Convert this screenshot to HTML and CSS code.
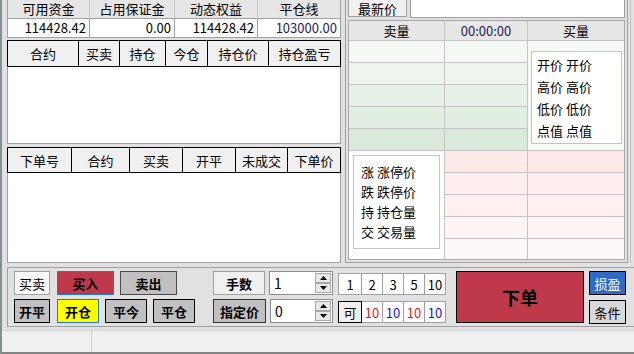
FILE: index.html
```html
<!DOCTYPE html>
<html lang="zh-CN">
<head>
<meta charset="utf-8">
<title>交易下单</title>
<link rel="stylesheet" href="styles.css">
</head>
<body>
<div class="app">
  <div class="main">
    <div class="left">
      <div class="acct">
        <div class="acct-h">可用资金</div>
        <div class="acct-h">占用保证金</div>
        <div class="acct-h">动态权益</div>
        <div class="acct-h">平仓线</div>
        <div class="acct-v">114428.42</div>
        <div class="acct-v">0.00</div>
        <div class="acct-v">114428.42</div>
        <div class="acct-v navy">103000.00</div>
      </div>
      <div class="grid-panel pos">
        <div class="grid-head pos-cols">
          <div>合约</div><div>买卖</div><div>持仓</div><div>今仓</div><div>持仓价</div><div>持仓盈亏</div>
        </div>
        <div class="grid-body pos-body"></div>
      </div>
      <div class="grid-panel ord">
        <div class="grid-head ord-cols">
          <div>下单号</div><div>合约</div><div>买卖</div><div>开平</div><div>未成交</div><div>下单价</div>
        </div>
        <div class="grid-body ord-body"></div>
      </div>
    </div>
    <div class="right">
      <div class="latest">
        <div class="latest-label">最新价</div>
        <div class="latest-input"></div>
      </div>
      <div class="quote">
        <div class="qh">卖量</div>
        <div class="qh navy">00:00:00</div>
        <div class="qh">买量</div>
        <div class="merge-sell">
          <div class="info info-sell">
            <div>开价 开价</div>
            <div>高价 高价</div>
            <div>低价 低价</div>
            <div>点值 点值</div>
          </div>
        </div>
        <div class="merge-buy">
          <div class="info info-buy">
            <div>涨 涨停价</div>
            <div>跌 跌停价</div>
            <div>持 持仓量</div>
            <div>交 交易量</div>
          </div>
        </div>
        <div class="qc s1"></div><div class="qc s1"></div>
        <div class="qc s2"></div><div class="qc s2"></div>
        <div class="qc s3"></div><div class="qc s3"></div>
        <div class="qc s4"></div><div class="qc s4"></div>
        <div class="qc s5"></div><div class="qc s5"></div>
        <div class="qc b1"></div><div class="qc b1"></div>
        <div class="qc b2"></div><div class="qc b2"></div>
        <div class="qc b3"></div><div class="qc b3"></div>
        <div class="qc b4"></div><div class="qc b4"></div>
        <div class="qc b5"></div><div class="qc b5"></div>
      </div>
    </div>
    <div class="edge"></div>
  </div>

  <div class="order-panel">
    <div class="grp grp-a">
      <div class="row">
        <div class="ctl lbl-mm">买卖</div>
        <div class="ctl bold btn-buy">买入</div>
        <div class="ctl bold btn-sell">卖出</div>
      </div>
      <div class="row">
        <div class="ctl bold btn-gray w36">开平</div>
        <div class="ctl bold btn-open">开仓</div>
        <div class="ctl bold btn-gray w42 ml6">平今</div>
        <div class="ctl bold btn-gray w42 ml6">平仓</div>
      </div>
    </div>
    <div class="grp grp-b">
      <div class="row">
        <div class="ctl bold lbl-qty">手数</div>
        <div class="spinbox w64">
          <span class="spin-val">1</span>
          <span class="spin">
            <span class="spin-btn"><svg width="7" height="4" viewBox="0 0 7 4"><polygon points="0,4 7,4 3.5,0" fill="#000"/></svg></span>
            <span class="spin-btn"><svg width="7" height="4" viewBox="0 0 7 4"><polygon points="0,0 7,0 3.5,4" fill="#000"/></svg></span>
          </span>
        </div>
      </div>
      <div class="row">
        <div class="ctl bold lbl-price">指定价</div>
        <div class="spinbox w63">
          <span class="spin-val">0</span>
          <span class="spin">
            <span class="spin-btn"><svg width="7" height="4" viewBox="0 0 7 4"><polygon points="0,4 7,4 3.5,0" fill="#000"/></svg></span>
            <span class="spin-btn"><svg width="7" height="4" viewBox="0 0 7 4"><polygon points="0,0 7,0 3.5,4" fill="#000"/></svg></span>
          </span>
        </div>
      </div>
    </div>
    <div class="grp grp-c">
      <div class="quick">
        <div class="qk first">1</div>
        <div class="qk">2</div>
        <div class="qk">3</div>
        <div class="qk">5</div>
        <div class="qk">10</div>
      </div>
      <div class="quick">
        <div class="qk first can">可</div>
        <div class="qk red">10</div>
        <div class="qk blue">10</div>
        <div class="qk red">10</div>
        <div class="qk blue">10</div>
      </div>
    </div>
    <div class="submit">下单</div>
    <div class="grp grp-e">
      <div class="ctl btn-pl">损盈</div>
      <div class="ctl btn-cond">条件</div>
    </div>
  </div>

  <div class="status">
    <div class="status-seg"></div>
    <div class="status-rest"></div>
  </div>
</div>
</body>
</html>
```

FILE: styles.css
```css
* { box-sizing: border-box; }

html, body {
  margin: 0;
  padding: 0;
}

body {
  width: 634px;
  height: 354px;
  overflow: hidden;
  background: #e1e1e1;
  font-family: "Noto Sans CJK SC", "Microsoft YaHei", sans-serif;
  font-size: 13px;
  color: #000;
}

.app {
  height: 354px;
  display: flex;
  flex-direction: column;
  border-left: 2px solid #868e96;
}

.navy { color: #1c1c58; }
.bold { font-weight: 700; }

/* ---------- main area ---------- */
.main {
  display: flex;
  align-items: flex-start;
  height: 263px;
  flex: none;
}

.left {
  width: 334px;
  margin-left: 5px;
  display: flex;
  flex-direction: column;
}

/* account summary */
.acct {
  margin-top: -1px;
  display: grid;
  grid-template-columns: 82px 85px 83px 82px;
  border: 1px solid #a0a0a0;
  background: #fff;
}

.acct-h {
  height: 19px;
  line-height: 18px;
  text-align: center;
  background: #e6e6e6;
  border-right: 1px solid #c8c8c8;
  border-bottom: 1px solid #a0a0a0;
}

.acct-v {
  height: 18px;
  line-height: 18px;
  text-align: right;
  padding-right: 3px;
  border-right: 1px solid #a0a0a0;
}

.acct-h:nth-child(4),
.acct-v:nth-child(8) { border-right: none; }

/* grid panels */
.pos { margin-top: 2px; }
.ord { margin-top: 3px; }

.grid-head {
  display: grid;
  border: 1px solid #000;
  background: #f0f0f0;
}

.pos-cols { height: 27px; grid-template-columns: 71px 41px 46px 42px 61px 1fr; }
.ord-cols { height: 26px; grid-template-columns: 64px 58px 53px 53px 52px 1fr; }

.grid-head > div {
  display: flex;
  align-items: center;
  justify-content: center;
  border-right: 1px solid #000;
}

.grid-head > div:last-child { border-right: none; }

.grid-body {
  background: #fff;
  border: 1px solid #a0a0a0;
  border-top: none;
}

.pos-body { height: 77px; }
.ord-body { height: 90px; }

/* right side */
.right {
  width: 283px;
  margin-left: 4px;
  height: 263px;
  border: 1px solid #a0a0a0;
  border-top: none;
  padding: 0 2px 2px 2px;
  display: flex;
  flex-direction: column;
}

.latest {
  margin-top: -1px;
  height: 19px;
  display: flex;
  align-items: flex-start;
}

.latest-label {
  width: 59px;
  height: 18px;
  padding-top: 1px;
  line-height: 15px;
  text-align: center;
  background: #f0f0f0;
  border: 1px solid #a0a0a0;
}

.latest-input {
  width: 215px;
  height: 19px;
  margin-left: 3px;
  background: #fff;
  border: 1px solid #a0a0a0;
}

.quote {
  margin-top: 2px;
  display: grid;
  grid-template-columns: 95px 82px 96px;
  grid-template-rows: 19px repeat(9, 21px) 20px;
  gap: 1px;
  background: #c4c4c4;
  border: 1px solid #a8a8a8;
}

.qh {
  background: #e6e6e6;
  line-height: 19px;
  text-align: center;
}

.merge-sell {
  grid-column: 3;
  grid-row: 2 / span 5;
  background: #f5faf5;
  padding: 10px 2px 0 3px;
}

.merge-buy {
  grid-column: 1;
  grid-row: 7 / span 5;
  background: #fff;
  padding: 4px 0 0 4px;
}

.info {
  background: #fff;
  border: 1px solid #c4c4c4;
}

.info-sell {
  width: 91px;
  height: 93px;
  padding: 2px 0 0 5px;
  line-height: 22px;
}

.info-buy {
  width: 87px;
  height: 94px;
  padding: 6px 0 0 7px;
  line-height: 20px;
}

.s1 { background: #f3f8f3; }
.s2 { background: #edf5ed; }
.s3 { background: #e7f1e7; }
.s4 { background: #e1eee1; }
.s5 { background: #daeada; }

.b1 { background: #ffe8e8; }
.b2 { background: #ffecec; }
.b3 { background: #fff0f0; }
.b4 { background: #fff4f4; }
.b5 { background: #fff8f8; }

.edge {
  margin-left: 2px;
  width: 1px;
  height: 263px;
  background: #c2c2c2;
}

/* ---------- order panel ---------- */
.order-panel {
  flex: none;
  margin-top: 4px;
  margin-left: 5px;
  width: 640px;
  height: 60px;
  border: 1px solid #a0a0a0;
  border-right: none;
  padding: 3px 0 0 6px;
  display: flex;
  align-items: flex-start;
}

.grp {
  display: flex;
  flex-direction: column;
  gap: 4px;
}

.row {
  display: flex;
  height: 24px;
}

.ctl {
  height: 24px;
  display: flex;
  align-items: center;
  justify-content: center;
  border: 1px solid #000;
}

.lbl-mm {
  width: 36px;
  background: #f8f8f8;
  border-color: #a0a0a0;
}

.btn-buy {
  width: 57px;
  margin-left: 7px;
  background: #c0394b;
  border-color: #1f78d6;
}

.btn-sell {
  width: 57px;
  margin-left: 6px;
  background: #c0c0c0;
  border-color: #4a4a4a;
}

.btn-gray { background: #c0c0c0; }
.w36 { width: 36px; }
.w42 { width: 42px; }
.ml6 { margin-left: 6px; }

.btn-open {
  width: 42px;
  margin-left: 7px;
  background: #ffff00;
  border-color: #1f78d6;
}

.grp-b { margin-left: 18px; }

.lbl-qty {
  width: 52px;
  background: #f0f0f0;
  border-color: #a0a0a0;
}

.lbl-price {
  width: 53px;
  background: #c0c0c0;
  border-color: #333;
}

.spinbox {
  height: 24px;
  margin-left: 4px;
  display: flex;
  align-items: stretch;
  background: #fff;
  border: 1px solid #8c8c8c;
}

.w64 { width: 64px; }
.w63 { width: 63px; }

.spin-val {
  flex: 1;
  padding-left: 4px;
  line-height: 22px;
  font-size: 14px;
}

.spin {
  width: 16px;
  margin: 1px 1px 1px 0;
  display: flex;
  flex-direction: column;
  gap: 0;
}

.spin-btn {
  flex: 1;
  display: flex;
  align-items: center;
  justify-content: center;
  background: #e8e8e8;
  border: 1px solid #a8a8a8;
}

.grp-c {
  margin-left: 5px;
  padding-top: 2px;
  gap: 6px;
}

.quick {
  display: flex;
  height: 22px;
}

.qk {
  width: 22px;
  height: 22px;
  margin-left: -1px;
  display: flex;
  align-items: center;
  justify-content: center;
  background: #fff;
  border: 1px solid #a0a0a0;
}

.qk.first {
  width: 24px;
  margin-left: 0;
}

.qk.can {
  position: relative;
  z-index: 1;
  background: #f0f0f0;
  border-color: #000;
}

.red { color: #f0142c; }
.blue { color: #1414f0; }

.submit {
  margin-left: 10px;
  width: 128px;
  height: 52px;
  display: flex;
  align-items: center;
  justify-content: center;
  background: #c0394b;
  border: 1px solid #000;
  font-size: 18px;
  font-weight: 700;
}

.grp-e {
  margin-left: 5px;
  gap: 5px;
}

.btn-pl {
  width: 37px;
  background: #316ac5;
  color: #fff;
}

.btn-cond {
  width: 37px;
  background: #d8d8d8;
}

/* ---------- status bar ---------- */
.status {
  flex: none;
  margin-top: 3px;
  height: 24px;
  display: flex;
  background: #f0f0f0;
  border-top: 1px solid #d6d6d6;
  border-bottom: 2px solid #858585;
}

.status-seg {
  width: 90px;
  border-right: 1px solid #d2d2d2;
}

.status-rest { flex: 1; }
```
